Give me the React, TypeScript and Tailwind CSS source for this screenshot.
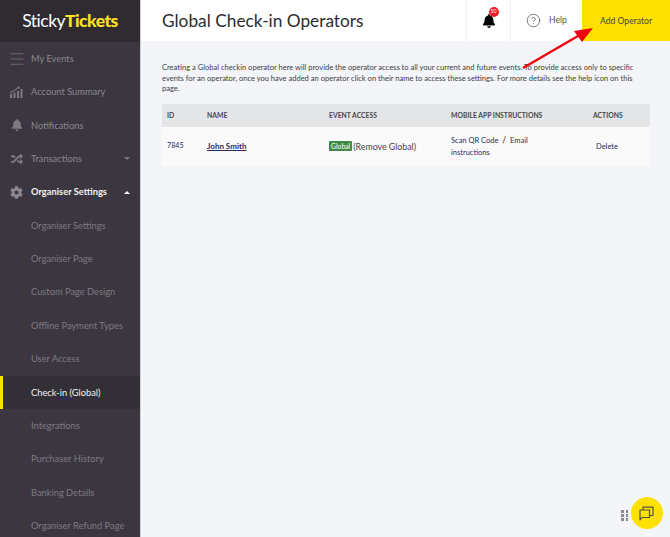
import { Menu, CircleHelp } from "lucide-react";
import { FaBell, FaCog, FaRandom } from "react-icons/fa";
import type { ReactNode } from "react";

const subItems = [
  "Organiser Settings",
  "Organiser Page",
  "Custom Page Design",
  "Offline Payment Types",
  "User Access",
  "Check-in (Global)",
  "Integrations",
  "Purchaser History",
  "Banking Details",
  "Organiser Refund Page",
];

function NavRow({ icon, label, active, caret }: { icon: ReactNode; label: string; active?: boolean; caret?: "up" | "down" }) {
  return (
    <div className={`flex h-[33.4px] shrink-0 items-center ${active ? "font-bold text-[#f2f2f2]" : "text-[#8b8890]"}`}>
      <div className={`flex w-[31px] shrink-0 justify-center pl-[2px] ${active ? "text-[#8b8890]" : "text-[#7d7a82]"}`}>{icon}</div>
      <span className="text-[9.3px]">{label}</span>
      {caret === "down" && <div className="ml-auto mr-[10px] h-0 w-0 border-x-[3px] border-t-[3px] border-x-transparent border-t-[#7d7a82]" />}
      {caret === "up" && <div className="ml-auto mr-[10px] h-0 w-0 border-x-[3px] border-b-[3px] border-x-transparent border-b-white" />}
    </div>
  );
}

export default function App() {
  return (
    <div className="relative flex h-[537px] w-[670px] overflow-hidden bg-[#f4f5f8] font-['Lato',sans-serif] text-[#3a3a40]">
      <aside className="flex w-[141px] shrink-0 flex-col overflow-hidden border-r border-[#d0d0d4] bg-[#3b3640]">
        <div className="flex h-[42px] shrink-0 items-center justify-center bg-[#2f2b31] text-[17.5px] tracking-[-0.5px]">
          <span className="text-white">Sticky</span>
          <span className="font-black text-[#fde021]">Tickets</span>
        </div>
        <NavRow icon={<Menu size={18} strokeWidth={1} />} label="My Events" />
        <NavRow
          icon={
            <svg width="13" height="12" viewBox="0 0 13 12" fill="currentColor">
              <rect x="0" y="8" width="2" height="4" />
              <rect x="3.5" y="6.5" width="2" height="5.5" />
              <rect x="7" y="5" width="2" height="7" />
              <rect x="10.5" y="3" width="2" height="9" />
              <path d="M0 6.2 7.5 2 7 .8 10 .6 9 3.2 8.3 2.6 .6 7.2z" />
            </svg>
          }
          label="Account Summary"
        />
        <NavRow icon={<FaBell size={12} />} label="Notifications" />
        <NavRow icon={<FaRandom size={12} />} label="Transactions" caret="down" />
        <NavRow icon={<FaCog size={13} />} label="Organiser Settings" active caret="up" />
        {subItems.map((s) => {
          const on = s === "Check-in (Global)";
          return (
            <div
              key={s}
              className={`flex h-[33.4px] shrink-0 items-center border-l-[3px] pl-[28px] text-[9.3px] ${on ? "border-[#fee100] bg-[#332f36] text-[#f2f2f2]" : "border-transparent text-[#7d7a82]"}`}
            >
              {s}
            </div>
          );
        })}
      </aside>

      <main className="flex min-w-0 flex-1 flex-col">
        <header className="flex h-[41px] shrink-0 items-center bg-white">
          <h1 className="ml-[21px] text-[17.3px] text-[#2c2c30]">Global Check-in Operators</h1>
          <div className="ml-auto flex h-full w-[45px] items-center justify-center border-x border-[#eeeeee]">
            <div className="relative flex justify-center">
              <FaBell size={14} color="#000" />
              <span className="absolute left-[7px] top-[-7px] flex h-[10px] w-[10px] items-center justify-center rounded-full bg-[#e8202a] text-[5px] text-white">50</span>
            </div>
          </div>
          <div className="flex h-full w-[71px] items-center justify-center gap-[8px] text-[8.6px] text-[#55555a]">
            <CircleHelp size={15} strokeWidth={1.2} />
            <span>Help</span>
          </div>
          <div className="flex h-full w-[88px] items-center justify-center bg-[#fee100] pt-[1px] text-[8.6px] text-[#444]">Add Operator</div>
        </header>

        <div className="px-[21px] pt-[22px]">
          <p className="w-[476px] text-[7.55px] leading-[10.6px] text-[#3c3c44]">
            Creating a Global checkin operator here will provide the operator access to all your current and future events. To provide access only to specific events for an operator, once you have added an operator click on their name to access these settings. For more details see the help icon on this page.
          </p>
          <div className="mt-[9px] w-[488px]">
            <div className="flex h-[23px] items-center bg-[#e4e5e7] text-[6.8px] font-bold text-[#47474c]">
              <div className="w-[41px] pl-[5px]">ID</div>
              <div className="w-[122px] pl-[4px]">NAME</div>
              <div className="w-[122px] pl-[4px]">EVENT ACCESS</div>
              <div className="w-[143px] pl-[4px]">MOBILE APP INSTRUCTIONS</div>
              <div className="pl-[3px]">ACTIONS</div>
            </div>
            <div className="flex h-[39px] items-center bg-[#fafafa] text-[7.5px] text-[#2a2a63]">
              <div className="w-[41px] pl-[5px] text-[7.2px]">7845</div>
              <div className="w-[122px] pl-[4px] text-[8px] font-bold underline">John Smith</div>
              <div className="flex w-[122px] items-center gap-[1px] pl-[4px] text-[8.8px] text-[#444]">
                <span className="rounded-[1px] bg-[#3f8a46] px-[2px] text-[6.8px] leading-[10px] text-white">Global</span>
                <span>(Remove Global)</span>
              </div>
              <div className="w-[143px] pl-[4px] pt-[1px] leading-[11.5px]">
                Scan QR Code <span className="mx-[2px] text-[8.5px] text-[#222]">/</span> Email
                <br />
                instructions
              </div>
              <div className="pl-[6px]">Delete</div>
            </div>
          </div>
        </div>
      </main>

      <svg className="absolute left-[515px] top-[24px]" width="80" height="50" viewBox="0 0 80 50">
        <line x1="8" y1="44" x2="63" y2="12" stroke="#f4000d" strokeWidth="2.4" />
        <polygon points="78,4 59,7 67,18" fill="#f4000d" />
      </svg>

      <div className="absolute left-[621px] top-[510px] grid grid-cols-2 gap-x-[2px] gap-y-[1.5px]">
        {[0, 1, 2, 3, 4, 5].map((i) => (
          <span key={i} className="h-[2.5px] w-[2.5px] bg-[#8a8a8a]" />
        ))}
      </div>
      <div className="absolute left-[631px] top-[497px] flex h-[32px] w-[32px] items-center justify-center rounded-full bg-[#fee100] pr-[2px]">
        <svg width="15" height="15" viewBox="0 0 15 15" fill="none" stroke="#55524a" strokeWidth="1.2" strokeLinejoin="round">
          <path d="M1 4h9.5v7.5H3L1 14z" />
          <path d="M4 4V1.2h10v8.3h-3.5" />
        </svg>
      </div>
    </div>
  );
}
